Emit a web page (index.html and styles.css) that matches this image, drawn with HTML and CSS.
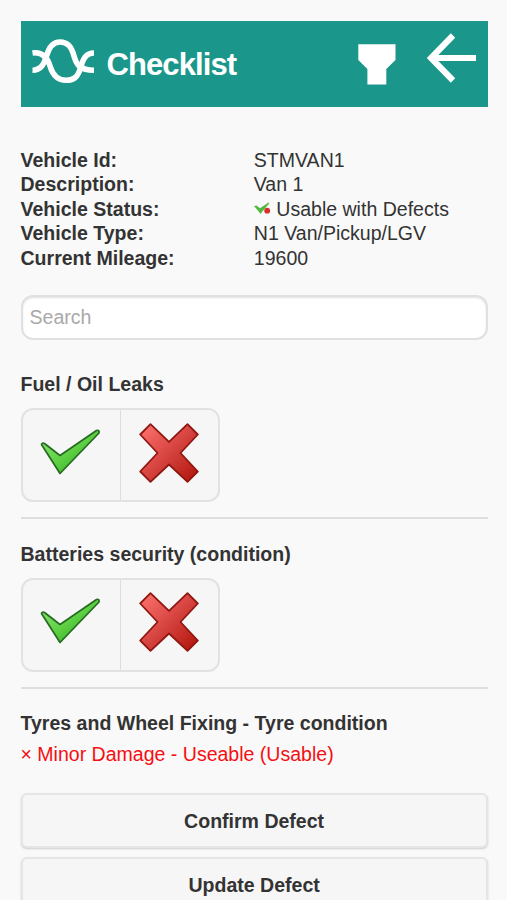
FILE: index.html
```
<!DOCTYPE html>
<html lang="en">
<head>
<meta charset="utf-8">
<title>Checklist</title>
<link rel="stylesheet" href="styles.css">
</head>
<body>
<svg class="defs" aria-hidden="true">
  <defs>
    <linearGradient id="green" x1="0" y1="0" x2="1" y2="1">
      <stop offset="0" stop-color="#8fe87a"/><stop offset=".5" stop-color="#5fd044"/><stop offset="1" stop-color="#259c16"/>
    </linearGradient>
    <linearGradient id="red" x1="0" y1="0" x2="1" y2="1">
      <stop offset="0" stop-color="#ff7470"/><stop offset=".5" stop-color="#d64440"/><stop offset="1" stop-color="#b01208"/>
    </linearGradient>
    <symbol id="tick" viewBox="0 0 60 60">
      <path d="M1.500 21.500Q2 19.500 4.500 20.500L20 32.500 56.500 7.500Q59.500 6.500 59 10L20 50.500Z" fill="url(#green)" stroke="#256b20" stroke-width="1.700" stroke-linejoin="round"/>
    </symbol>
    <symbol id="cross" viewBox="0 0 60 60">
      <path d="M11.500 1.200 30 18.800 48.500 1.200 58.800 11.500 41.500 30 58.800 48.500 48.500 58.800 30 41.500 11.500 58.800 1.200 48.500 18.500 30 1.200 11.500Z" fill="url(#red)" stroke="#8f1712" stroke-width="1.800" stroke-linejoin="round"/>
    </symbol>
  </defs>
</svg>
<main class="page">
  <header class="bar">
    <svg class="logo" viewBox="32 38 63 47" fill="none" stroke="#fff" stroke-width="5.600">
      <path d="M32.500 70.200C41 70.200 44 64 46.500 56C49 47 53 42 60 42C68 42 71.500 47 74 56C76.500 65 80 70.200 94 70.200"/>
      <path d="M32.500 53C43 51.500 47.500 58 50 66C53 76 58 80.300 66 80.300C75 80.300 78 76 80.500 68C83 58.500 86 53 94 53"/>
    </svg>
    <h1 class="title">Checklist</h1>
    <svg class="filter" viewBox="0 0 38 41"><path d="M.3.300H37.500V16L28.300 25V40.500H9.400V25L.3 16Z" fill="#fff"/></svg>
    <svg class="back" viewBox="0 0 49 50"><path d="M26 2.500 4 25 26 47.500M4 25H49" fill="none" stroke="#fff" stroke-width="6.200"/></svg>
  </header>
  <dl class="details">
    <dt>Vehicle Id:</dt><dd>STMVAN1</dd>
    <dt>Description:</dt><dd>Van 1</dd>
    <dt>Vehicle Status:</dt><dd><svg class="status" viewBox="0 0 17 13"><path d="M0 4 2.500 3.500 6 6.300 14.500.500 15.500 1 6.500 11.800Z" fill="#50ba3c"/><circle cx="13.200" cy="8.700" r="2.900" fill="#d82e2e"/></svg>Usable with Defects</dd>
    <dt>Vehicle Type:</dt><dd>N1 Van/Pickup/LGV</dd>
    <dt>Current Mileage:</dt><dd>19600</dd>
  </dl>
  <input class="search" type="text" placeholder="Search" aria-label="Search">
  <section class="item">
    <h2>Fuel / Oil Leaks</h2>
    <div class="choices">
      <button aria-label="Pass"><svg><use href="#tick"/></svg></button>
      <button aria-label="Fail"><svg><use href="#cross"/></svg></button>
    </div>
  </section>
  <section class="item">
    <h2>Batteries security (condition)</h2>
    <div class="choices">
      <button aria-label="Pass"><svg><use href="#tick"/></svg></button>
      <button aria-label="Fail"><svg><use href="#cross"/></svg></button>
    </div>
  </section>
  <section class="defect">
    <h2>Tyres and Wheel Fixing - Tyre condition</h2>
    <p>× Minor Damage - Useable (Usable)</p>
    <button class="action">Confirm Defect</button>
    <button class="action">Update Defect</button>
  </section>
</main>
</body>
</html>
```
FILE: styles.css
```
* { box-sizing: border-box; }
html, body { height: 100%; }
body {
  margin: 0;
  background: #f9f9f9;
  color: #333;
  font: 19.55px/24.5px "Liberation Sans", Arial, sans-serif;
  overflow: hidden;
}
.defs { position: absolute; width: 0; height: 0; }
.page { height: 900px; overflow: hidden; padding: 20.5px 19.3px 0 20.5px; }
.bar {
  display: flex;
  align-items: flex-start;
  height: 86.5px;
  padding: 0 12px 0 11.5px;
  background: #1a978a;
}
.logo { width: 63px; height: 47px; margin-top: 17.5px; }
.title {
  margin: 26.6px auto 0 11.5px;
  font-size: 31px;
  line-height: 36px;
  letter-spacing: -.9px;
  color: #fff;
}
.filter { width: 38px; height: 41px; margin-top: 23px; }
.back { width: 49px; height: 50px; margin: 12px 0 0 31px; }
.details {
  display: grid;
  grid-template-columns: 233.3px 1fr;
  margin: 40.6px 0 0;
}
dt, h2 { font-weight: bold; }
dd { margin: 0; }
.status { width: 17px; height: 13px; margin-right: 5.5px; vertical-align: 1px; }
.search {
  display: block;
  width: 100%;
  height: 45px;
  margin-top: 25.4px;
  padding: 0 7px;
  border: 2px solid #e0e0e0;
  border-radius: 12px;
  background: #fff;
  box-shadow: inset 0 1px 2px #e2e2e2;
  font: inherit;
}
.search::placeholder { color: #a9a9a9; opacity: 1; }
h2 { margin: 0; font-size: 19.55px; line-height: 25px; }
.item { height: 169.3px; padding-bottom: 16px; border-bottom: 2px solid #dedede; }
.search + .item { height: 179px; padding-top: 32px; }
.item + .item { padding-top: 22.5px; }
.choices {
  display: flex;
  width: 199px;
  height: 94px;
  margin-top: 10.6px;
  border: 2px solid #e2e2e2;
  border-radius: 12px;
  background: #f6f6f6;
  overflow: hidden;
}
.choices button {
  flex: 1;
  padding: 0 0 5px;
  border: 0;
  background: none;
}
.choices button + button { border-left: 1px solid #ddd; }
.choices svg { display: block; width: 60px; height: 60px; margin: auto; }
.choices button:first-child svg { transform: translateX(-1px); }
.defect { padding-top: 22px; }
.defect p { margin: 6px 0 26.4px; color: #f50f12; line-height: 25px; }
.action {
  display: block;
  width: 100%;
  height: 55px;
  margin-bottom: 9px;
  padding: 2px 6px 1px;
  border: 2px solid #e5e5e5;
  border-radius: 6px;
  background: #f6f6f6;
  box-shadow: 0 1px 2px #ccc;
  color: #333;
  font: bold 19.55px "Liberation Sans", Arial, sans-serif;
}
```
